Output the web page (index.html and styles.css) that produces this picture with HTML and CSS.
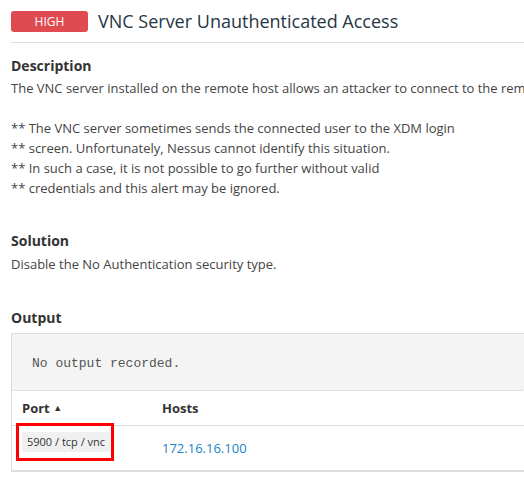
FILE: index.html
```html
<!DOCTYPE html>
<html>
<head>
<meta charset="utf-8">
<link rel="stylesheet" href="styles.css">
</head>
<body>
<div class="page">
  <div class="header">
    <span class="badge">HIGH</span>
    <h1 class="title">VNC Server Unauthenticated Access</h1>
  </div>

  <section class="section desc">
    <h2 class="heading">Description</h2>
    <div class="text">The VNC server installed on the remote host allows an attacker to connect to the remote host as no authentication is required to access this service.

** The VNC server sometimes sends the connected user to the XDM login
** screen. Unfortunately, Nessus cannot identify this situation.
** In such a case, it is not possible to go further without valid
** credentials and this alert may be ignored.</div>
  </section>

  <section class="section sol">
    <h2 class="heading">Solution</h2>
    <div class="text">Disable the No Authentication security type.</div>
  </section>

  <section class="section out">
    <h2 class="heading">Output</h2>
    <div class="outbox">
      <pre class="outtext">No output recorded.</pre>
      <table class="ports">
        <thead>
          <tr><th class="c-port">Port <span class="arrow">▲</span></th><th class="c-host">Hosts</th></tr>
        </thead>
        <tbody>
          <tr>
            <td class="c-port"><span class="mark"><span class="pill">5900 / tcp / vnc</span></span></td>
            <td class="c-host"><a class="host" href="#">172.16.16.100</a></td>
          </tr>
        </tbody>
      </table>
    </div>
  </section>
</div>
</body>
</html>
```

FILE: styles.css
```css
html, body {
  margin: 0;
  padding: 0;
  background: #fff;
  overflow: hidden;
}
body {
  font-family: "Open Sans", sans-serif;
  color: #333;
}
.page {
  width: 760px;
  padding: 11px 0 0 11px;
}
.header {
  display: flex;
  align-items: center;
  gap: 10px;
  height: 21px;
  padding-bottom: 10px;
  border-bottom: 1px solid #ddd;
}
.badge {
  width: 77px;
  height: 21px;
  line-height: 21px;
  text-align: center;
  background: #e04a51;
  color: #fff;
  font-size: 12px;
  border-radius: 3px;
}
.title {
  margin: 0;
  font-size: 18px;
  font-weight: 400;
  color: #263645;
  line-height: 21px;
}
.heading {
  margin: 0 0 2px;
  font-size: 14px;
  font-weight: 700;
  color: #333;
  line-height: 20px;
}
.text {
  font-size: 13px;
  line-height: 20px;
  white-space: pre;
  color: #444;
}
.desc { margin-top: 13px; }
.sol { margin-top: 33px; }
.sol .heading { margin-bottom: 3px; }
.out { margin-top: 34px; }
.out .heading { margin-bottom: 5px; }
.outbox {
  border: 1px solid #ddd;
  border-right: none;
}
.outtext {
  margin: 0;
  background: #f4f4f4;
  font-family: "Liberation Mono", monospace;
  font-size: 13px;
  line-height: 16px;
  color: #555;
  padding: 22px 20px 18px 20px;
  border-bottom: 1px dotted #ccc;
}
.ports {
  width: 100%;
  border-collapse: collapse;
  font-size: 13px;
}
.ports th {
  text-align: left;
  font-weight: 700;
  height: 34px;
  padding: 0 10px;
  border-bottom: 1px solid #ddd;
  color: #333;
}
.ports th.c-port { width: 120px; }
.arrow { font-size: 9px; vertical-align: 2px; }
.ports td {
  height: 44px;
  padding: 0 10px;
  border-bottom: 1px solid #ddd;
}
.ports td.c-port {
  padding-left: 4px;
  vertical-align: top;
}
.mark {
  display: inline-flex;
  margin-top: -3px;
  border: 3px solid #f00;
  padding: 6px 1px 6px 3px;
}
.pill {
  display: block;
  background: #f0f0f0;
  font-size: 11px;
  line-height: 20px;
  height: 20px;
  padding: 0 5px;
  color: #333;
  border-radius: 2px;
  white-space: nowrap;
}
.host {
  color: #1a83c6;
  text-decoration: none;
  font-size: 13px;
}
```
